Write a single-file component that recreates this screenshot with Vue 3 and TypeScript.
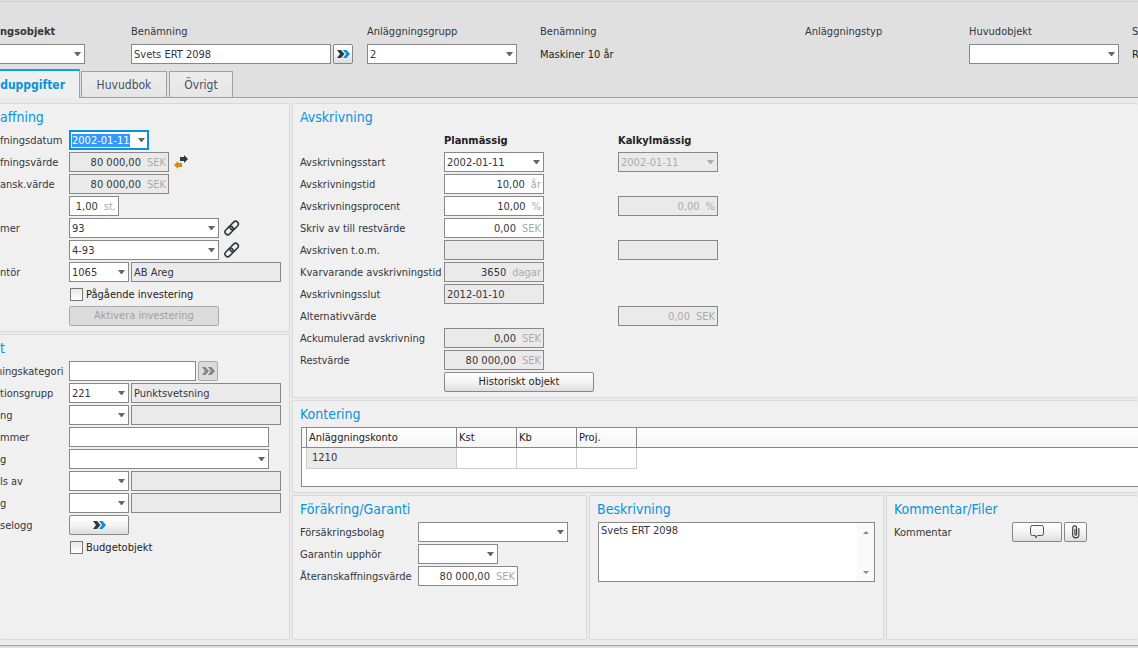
<script setup lang="ts">
import { h, onMounted, ref } from 'vue'

interface ControlProps {
  id: string
  kind?: 'text' | 'select' | 'number'
  value?: string
  unit?: string
  readonly?: boolean
  disabled?: boolean
  label?: string
}

/* One bordered control: text box, number with a unit, or drop-down. */
const Control = (p: ControlProps) => {
  const value = p.value ?? ''
  const state = { 'is-readonly': p.readonly, 'is-disabled': p.disabled }
  if (p.kind === 'select') {
    return h('span', { class: ['control', 'control-select', state] }, [
      h('select', { id: p.id, disabled: p.disabled, 'aria-label': p.label }, [h('option', value)]),
    ])
  }
  return h('span', { class: ['control', { 'control-number': p.kind === 'number' }, state] }, [
    h('input', {
      id: p.id,
      type: 'text',
      value,
      readonly: p.readonly,
      disabled: p.disabled,
      'aria-label': p.label,
    }),
    p.unit ? h('span', { class: 'unit' }, p.unit) : null,
  ])
}
Control.props = {
  id: String,
  kind: String,
  value: String,
  unit: String,
  readonly: Boolean,
  disabled: Boolean,
  label: String,
}

interface DepreciationRow {
  id: string
  label: string
  plan?: Omit<ControlProps, 'id'>
  calc?: Omit<ControlProps, 'id'>
}

const depreciation: DepreciationRow[] = [
  {
    id: 'start',
    label: 'Avskrivningsstart',
    plan: { kind: 'select', value: '2002-01-11' },
    calc: { kind: 'select', value: '2002-01-11', disabled: true },
  },
  { id: 'tid', label: 'Avskrivningstid', plan: { kind: 'number', value: '10,00', unit: 'år' } },
  {
    id: 'procent',
    label: 'Avskrivningsprocent',
    plan: { kind: 'number', value: '10,00', unit: '%' },
    calc: { kind: 'number', value: '0,00', unit: '%', disabled: true },
  },
  { id: 'till', label: 'Skriv av till restvärde', plan: { kind: 'number', value: '0,00', unit: 'SEK' } },
  { id: 'tom', label: 'Avskriven t.o.m.', plan: { readonly: true }, calc: { readonly: true } },
  {
    id: 'kvar',
    label: 'Kvarvarande avskrivningstid',
    plan: { kind: 'number', value: '3650', unit: 'dagar', readonly: true },
  },
  { id: 'slut', label: 'Avskrivningsslut', plan: { value: '2012-01-10', readonly: true } },
  {
    id: 'alt',
    label: 'Alternativvärde',
    calc: { kind: 'number', value: '0,00', unit: 'SEK', disabled: true },
  },
  {
    id: 'ack',
    label: 'Ackumulerad avskrivning',
    plan: { kind: 'number', value: '0,00', unit: 'SEK', readonly: true },
  },
  {
    id: 'rest',
    label: 'Restvärde',
    plan: { kind: 'number', value: '80 000,00', unit: 'SEK', readonly: true },
  },
]

const dateInput = ref<HTMLInputElement | null>(null)
onMounted(() => {
  dateInput.value?.focus()
  dateInput.value?.select()
})
</script>

<template>
  <div class="page">
    <header class="head">
      <div class="head-field">
        <label for="objekt" class="strong">ngsobjekt</label>
        <Control id="objekt" kind="select" class="w85 cut" />
      </div>
      <div class="head-field">
        <label for="namn">Benämning</label>
        <div class="inline">
          <Control id="namn" value="Svets ERT 2098" class="w200" />
          <button type="button" class="btn btn-icon" aria-label="Visa">
            <svg width="13" height="8" viewBox="0 0 13 8">
              <path d="M0 0h4l3.500 4-3.500 4H0l3-4z" fill="#33383d" />
              <path d="M6 0h3.500l3.500 4-3.500 4H6l3-4z" fill="#0a92dd" />
            </svg>
          </button>
        </div>
      </div>
      <div class="head-field">
        <label for="grupp">Anläggningsgrupp</label>
        <Control id="grupp" kind="select" value="2" class="w150" />
      </div>
      <div class="head-field">
        <span>Benämning</span>
        <span class="static">Maskiner 10 år</span>
      </div>
      <div class="head-field"><span>Anläggningstyp</span></div>
      <div class="head-field">
        <label for="huvud">Huvudobjekt</label>
        <Control id="huvud" kind="select" class="w150" />
      </div>
      <div class="head-field">
        <span>S</span>
        <span class="static">R</span>
      </div>
    </header>

    <nav class="tabs">
      <button type="button" class="tab tab-active">duppgifter</button>
      <button type="button" class="tab tab-book">Huvudbok</button>
      <button type="button" class="tab tab-other">Övrigt</button>
    </nav>

    <main class="main">
      <div class="col-left">
        <section class="panel panel-left">
          <h2>affning</h2>
          <div class="row">
            <label for="datum">fningsdatum</label>
            <span class="control control-select control-focus w80">
              <input id="datum" ref="dateInput" type="text" value="2002-01-11" />
            </span>
          </div>
          <div class="row">
            <label for="varde">fningsvärde</label>
            <Control id="varde" kind="number" value="80 000,00" unit="SEK" readonly class="w100" />
            <svg class="side-icon" width="14" height="14" viewBox="0 0 14 14">
              <path d="M6 2h4V0l4 4-4 4V6H6z" fill="#33383d" />
              <path d="M8 8v4H4v2L0 10l4-4v2z" fill="#e08a0a" />
            </svg>
          </div>
          <div class="row">
            <label for="ansk">ansk.värde</label>
            <Control id="ansk" kind="number" value="80 000,00" unit="SEK" readonly class="w100" />
          </div>
          <div class="row">
            <span></span>
            <Control id="antal" kind="number" value="1,00" unit="st." label="Antal" class="w50" />
          </div>
          <div class="row">
            <label for="nummer">mer</label>
            <Control id="nummer" kind="select" value="93" class="w150" />
            <svg class="side-icon" width="16" height="16" viewBox="0 0 16 16">
              <g fill="none" stroke="#33383d" stroke-width="1.600" transform="rotate(-45 8 8)">
                <rect x="-0.500" y="5" width="9.500" height="5.500" rx="2.750" />
                <rect x="6.500" y="5" width="9.500" height="5.500" rx="2.750" />
              </g>
            </svg>
          </div>
          <div class="row">
            <span></span>
            <Control id="nummer2" kind="select" value="4-93" label="Nummer" class="w150" />
            <svg class="side-icon" width="16" height="16" viewBox="0 0 16 16">
              <g fill="none" stroke="#33383d" stroke-width="1.600" transform="rotate(-45 8 8)">
                <rect x="-0.500" y="5" width="9.500" height="5.500" rx="2.750" />
                <rect x="6.500" y="5" width="9.500" height="5.500" rx="2.750" />
              </g>
            </svg>
          </div>
          <div class="row">
            <label for="lev">ntör</label>
            <Control id="lev" kind="select" value="1065" class="w60" />
            <Control id="levnamn" value="AB Areg" readonly label="Namn" class="w150" />
          </div>
          <div class="row">
            <span></span>
            <label class="check"><input type="checkbox" />Pågående investering</label>
          </div>
          <div class="row">
            <span></span>
            <button type="button" class="btn w150" disabled>Aktivera investering</button>
          </div>
        </section>

        <section class="panel panel-left grow">
          <h2>t</h2>
          <div class="row">
            <label for="kategori" class="clip">ningskategori</label>
            <Control id="kategori" class="w127" />
            <button type="button" class="btn btn-icon" disabled aria-label="Visa kategori">
              <svg width="13" height="8" viewBox="0 0 13 8">
                <path d="M0 0h3.500l3.500 4-3.500 4H0l3-4zM6 0h3.500l3.500 4-3.500 4H6l3-4z" fill="#858585" />
              </svg>
            </button>
          </div>
          <div class="row">
            <label for="funktion">tionsgrupp</label>
            <Control id="funktion" kind="select" value="221" class="w60" />
            <Control id="funktionnamn" value="Punktsvetsning" readonly label="Gruppnamn" class="w150" />
          </div>
          <div class="row">
            <label for="ng">ng</label>
            <Control id="ng" kind="select" class="w60" />
            <Control id="ngnamn" readonly label="Namn" class="w150" />
          </div>
          <div class="row">
            <label for="serie">mmer</label>
            <Control id="serie" class="w200" />
          </div>
          <div class="row">
            <label for="g1">g</label>
            <Control id="g1" kind="select" class="w200" />
          </div>
          <div class="row">
            <label for="av">ls av</label>
            <Control id="av" kind="select" class="w60" />
            <Control id="avnamn" readonly label="Namn" class="w150" />
          </div>
          <div class="row">
            <label for="g2">g</label>
            <Control id="g2" kind="select" class="w60" />
            <Control id="g2namn" readonly label="Namn" class="w150" />
          </div>
          <div class="row">
            <label for="logg">selogg</label>
            <button id="logg" type="button" class="btn w60">
              <svg width="13" height="8" viewBox="0 0 13 8">
                <path d="M0 0h4l3.500 4-3.500 4H0l3-4z" fill="#33383d" />
                <path d="M6 0h3.500l3.500 4-3.500 4H6l3-4z" fill="#0a92dd" />
              </svg>
            </button>
          </div>
          <div class="row">
            <span></span>
            <label class="check"><input type="checkbox" />Budgetobjekt</label>
          </div>
        </section>
      </div>

      <div class="col-right">
        <section class="panel panel-open">
          <h2>Avskrivning</h2>
          <div class="dep">
            <span></span>
            <strong>Planmässig</strong>
            <strong>Kalkylmässig</strong>
            <template v-for="row in depreciation" :key="row.id">
              <label :for="(row.plan ? 'plan-' : 'calc-') + row.id">{{ row.label }}</label>
              <Control v-if="row.plan" v-bind="row.plan" :id="'plan-' + row.id" class="w100" />
              <span v-else></span>
              <Control
                v-if="row.calc"
                v-bind="row.calc"
                :id="'calc-' + row.id"
                :label="row.label"
                class="w100"
              />
              <span v-else></span>
            </template>
            <span></span>
            <button type="button" class="btn w150">Historiskt objekt</button>
          </div>
        </section>

        <section class="panel panel-open">
          <h2>Kontering</h2>
          <div class="grid-box">
            <table>
              <colgroup>
                <col class="c-mark" /><col class="c-konto" /><col class="c-dim" /><col class="c-dim" /><col class="c-dim" /><col />
              </colgroup>
              <thead>
                <tr><th></th><th>Anläggningskonto</th><th>Kst</th><th>Kb</th><th>Proj.</th><th></th></tr>
              </thead>
              <tbody>
                <tr><td></td><td class="konto">1210</td><td></td><td></td><td></td><td></td></tr>
              </tbody>
            </table>
          </div>
        </section>

        <div class="bottom">
          <section class="panel panel-warranty">
            <h2>Föräkring/Garanti</h2>
            <div class="row">
              <label for="bolag">Försäkringsbolag</label>
              <Control id="bolag" kind="select" class="w150" />
            </div>
            <div class="row">
              <label for="garanti">Garantin upphör</label>
              <Control id="garanti" kind="select" class="w80" />
            </div>
            <div class="row">
              <label for="ater">Återanskaffningsvärde</label>
              <Control id="ater" kind="number" value="80 000,00" unit="SEK" class="w100" />
            </div>
          </section>
          <section class="panel">
            <h2>Beskrivning</h2>
            <div class="memo">
              <textarea aria-label="Beskrivning">Svets ERT 2098</textarea>
              <span class="memo-bar">
                <svg width="6" height="3" viewBox="0 0 6 3"><path d="M3 0l3 3H0z" fill="#888" /></svg>
                <svg width="6" height="3" viewBox="0 0 6 3"><path d="M0 0h6L3 3z" fill="#888" /></svg>
              </span>
            </div>
          </section>
          <section class="panel panel-open panel-comment">
            <h2>Kommentar/Filer</h2>
            <div class="row">
              <label for="kommentar">Kommentar</label>
              <button id="kommentar" type="button" class="btn w50">
                <svg width="16" height="14" viewBox="0 0 16 14">
                  <path
                    d="M3.500.500h9a2 2 0 0 1 2 2v6a2 2 0 0 1-2 2H8.500L6.500 13v-2.500h-3a2 2 0 0 1-2-2v-6a2 2 0 0 1 2-2z"
                    fill="none"
                    stroke="#4a5058"
                  />
                </svg>
              </button>
              <button type="button" class="btn btn-clip" aria-label="Filer">
                <svg width="9" height="14" viewBox="0 0 8 12">
                  <path
                    d="M3.500 3v5a.750.750 0 0 0 1.500 0V2.250a1.750 1.750 0 0 0-3.500 0"
                    fill="none"
                    stroke="#33383d"
                  />
                  <path d="M1.500 2v6.500a2.750 2.750 0 0 0 5.500 0V2.500" fill="none" stroke="#33383d" />
                </svg>
              </button>
            </div>
          </section>
        </div>
      </div>
    </main>
    <footer class="foot"></footer>
  </div>
</template>

<style>
body {
  background: #e0e0e0;
  overflow: hidden;
}
.control {
  position: relative;
  display: flex;
  align-items: center;
  box-sizing: border-box;
  height: 20px;
  border: 1px solid #888;
  background: #fff;
  color: #33363c;
}
.control input,
.control select {
  flex: 1;
  box-sizing: border-box;
  min-width: 0;
  width: 100%;
  height: 18px;
  margin: 0;
  padding: 1px 2px 0;
  border: 0;
  outline: 0;
  border-radius: 0;
  background: transparent;
  color: inherit;
  font: inherit;
  line-height: 17px;
  opacity: 1;
  appearance: none;
}
.control-select::after {
  content: '';
  position: absolute;
  top: 7px;
  right: 3px;
  width: 1px;
  border: 3px solid transparent;
  border-top: 4px solid #666;
  border-bottom: 0;
  pointer-events: none;
}
.control-number input {
  padding-right: 0;
  text-align: right;
}
.control .unit {
  margin: 0 2px 0 6px;
  padding-top: 1px;
  line-height: 17px;
  color: #aaa;
}
.control.is-readonly,
.control.is-disabled {
  background: #eaeaea;
}
.control.is-disabled {
  color: #aaa;
}
.control.is-disabled::after {
  border-top-color: #aaa;
}
.w50 { width: 50px; }
.w60 { width: 60px; }
.w80 { width: 80px; }
.w85 { width: 85px; }
.w100 { width: 100px; }
.w127 { width: 127px; }
.w150 { width: 150px; }
.w200 { width: 200px; }
</style>

<style scoped>
.page {
  display: flex;
  flex-direction: column;
  min-height: 100vh;
  box-sizing: border-box;
  overflow: hidden;
  padding-top: 1px;
  background: #e0e0e0;
  color: #33363c;
  font-family: 'DejaVu Sans Condensed', 'DejaVu Sans', sans-serif;
  font-size: 11px;
  line-height: 20px;
}
.head {
  display: grid;
  grid-template-columns: 131px 236px 173px 265px 164px 163px 1fr;
  border-top: 1px solid #ccc;
  padding-top: 20px;
}
.head-field {
  display: flex;
  flex-direction: column;
  gap: 2px;
  min-width: 0;
  white-space: nowrap;
}
.strong {
  font-weight: bold;
}
.static {
  padding-top: 1px;
  color: #222;
}
.inline {
  display: flex;
  gap: 2px;
}
.cut {
  border-left: 0;
}
.tabs {
  display: flex;
  align-items: flex-end;
  height: 29px;
  margin-top: 3px;
  border-bottom: 1px solid #a0a0a0;
}
.tab {
  box-sizing: border-box;
  height: 26px;
  padding: 0;
  border: 1px solid #a0a0a0;
  border-bottom: 0;
  background: linear-gradient(#ececec, #e6e6e6);
  color: #44525f;
  font-family: inherit;
  font-size: 12px;
}
.tab-active {
  width: 80px;
  height: 29px;
  margin-bottom: -1px;
  padding-right: 14px;
  border-left: 0;
  border-top: 2px solid #0a9fee;
  background: #efefef;
  color: #0a92dd;
  font-weight: bold;
  text-align: right;
}
.tab-book {
  width: 86px;
  margin-left: 1px;
}
.tab-other {
  width: 64px;
  margin-left: 2px;
}
.main {
  flex: 1;
  display: grid;
  grid-template-columns: 290px minmax(0, 1fr);
  gap: 2px;
  padding: 5px 0;
  background: #ebebeb;
}
.col-left,
.col-right {
  display: flex;
  flex-direction: column;
  gap: 2px;
}
.grow,
.bottom {
  flex: 1;
}
.panel {
  box-sizing: border-box;
  border: 1px solid #d9d9d9;
  border-radius: 2px;
  padding: 0 8px 5px 7px;
  background: #f0f0f0;
}
.panel-left {
  border-left: 0;
  padding-left: 0;
}
.panel-open {
  border-right: 0;
  padding-right: 0;
}
.panel h2 {
  margin: 0;
  color: #0a92dd;
  font-size: 14px;
  font-weight: normal;
  line-height: 26px;
}
.row {
  display: grid;
  grid-template-columns: 69px auto auto;
  justify-content: start;
  align-items: center;
  height: 20px;
  white-space: nowrap;
}
.row > label,
.dep > label {
  padding-top: 1px;
  line-height: 19px;
}
/* Label scrolled partly past the left edge. */
.row > .clip {
  margin-left: -4px;
}
.row + .row {
  margin-top: 2px;
}
.row > :nth-child(3) {
  margin-left: 2px;
}
.row > .side-icon {
  margin-left: 5px;
}
.panel-warranty .row {
  grid-template-columns: 118px auto;
}
.panel-comment .row {
  grid-template-columns: 118px auto auto;
}
.control-focus {
  border: 2px solid #0a92dd;
}
.control-focus::after {
  top: 6px;
  right: 2px;
}
.control-focus input {
  height: 16px;
  padding: 1px 1px 0;
  line-height: 15px;
}
.control-focus input::selection {
  background: #3399ff;
  color: #fff;
}
.row > .check {
  display: flex;
  align-items: center;
  gap: 3px;
  padding: 0 0 0 1px;
  color: #222;
}
.check input {
  box-sizing: border-box;
  width: 13px;
  height: 13px;
  margin: 0;
  border: 1px solid #777;
  background: linear-gradient(#e8e8e8, #fff);
  appearance: none;
}
.btn {
  display: flex;
  align-items: center;
  justify-content: center;
  box-sizing: border-box;
  height: 20px;
  padding: 0;
  border: 1px solid #888;
  border-radius: 2px;
  background: linear-gradient(#fff, #f4f4f4 50%, #dedede);
  color: #222;
  font: inherit;
}
.btn:disabled {
  border-color: #aaa;
  background: #dcdcdc;
  color: #a0a0a0;
}
.btn-icon {
  width: 20px;
}
.btn-clip {
  width: 23px;
}
.dep {
  display: grid;
  grid-template-columns: 144px 174px 100px;
  grid-auto-rows: 20px;
  row-gap: 2px;
  white-space: nowrap;
}
.dep strong {
  padding-top: 1px;
  line-height: 19px;
  color: #222;
}
.grid-box {
  box-sizing: border-box;
  height: 60px;
  margin-left: 1px;
  border: 1px solid #888;
  border-right: 0;
  background: #fff;
}
table {
  width: 100%;
  table-layout: fixed;
  border-collapse: separate;
  border-spacing: 0;
}
.c-mark { width: 5px; }
.c-konto { width: 150px; }
.c-dim { width: 60px; }
th,
td {
  box-sizing: border-box;
  height: 20px;
  padding: 0 0 0 2px;
  line-height: 19px;
  text-align: left;
  font-weight: normal;
}
th {
  border-right: 1px solid #888;
  border-bottom: 1px solid #888;
  background: linear-gradient(#fff, #f5f5f5);
  color: #222;
}
td {
  height: 21px;
  border-right: 1px solid #ccc;
  border-bottom: 1px solid #ccc;
  vertical-align: top;
}
th:first-child,
td:first-child {
  padding: 0;
}
td:first-child {
  border-bottom: 0;
}
th:last-child {
  border-right: 0;
}
td:last-child {
  border: 0;
}
td.konto {
  padding-left: 5px;
  background: #ebebeb;
}
.bottom {
  display: grid;
  grid-template-columns: 295px 295px minmax(0, 1fr);
  gap: 2px;
}
.memo {
  display: flex;
  box-sizing: border-box;
  height: 60px;
  margin-left: 1px;
  border: 1px solid #888;
  background: #fff;
}
.memo textarea {
  flex: 1;
  min-width: 0;
  padding: 0 2px;
  border: 0;
  outline: 0;
  resize: none;
  background: transparent;
  color: inherit;
  font: inherit;
  line-height: 16px;
}
.memo-bar {
  display: flex;
  flex-direction: column;
  align-items: center;
  justify-content: space-between;
  box-sizing: border-box;
  width: 17px;
  padding: 8px 0 7px;
  background: #fafafa;
}
.foot {
  height: 2px;
  border-top: 1px solid #a0a0a0;
}
</style>
